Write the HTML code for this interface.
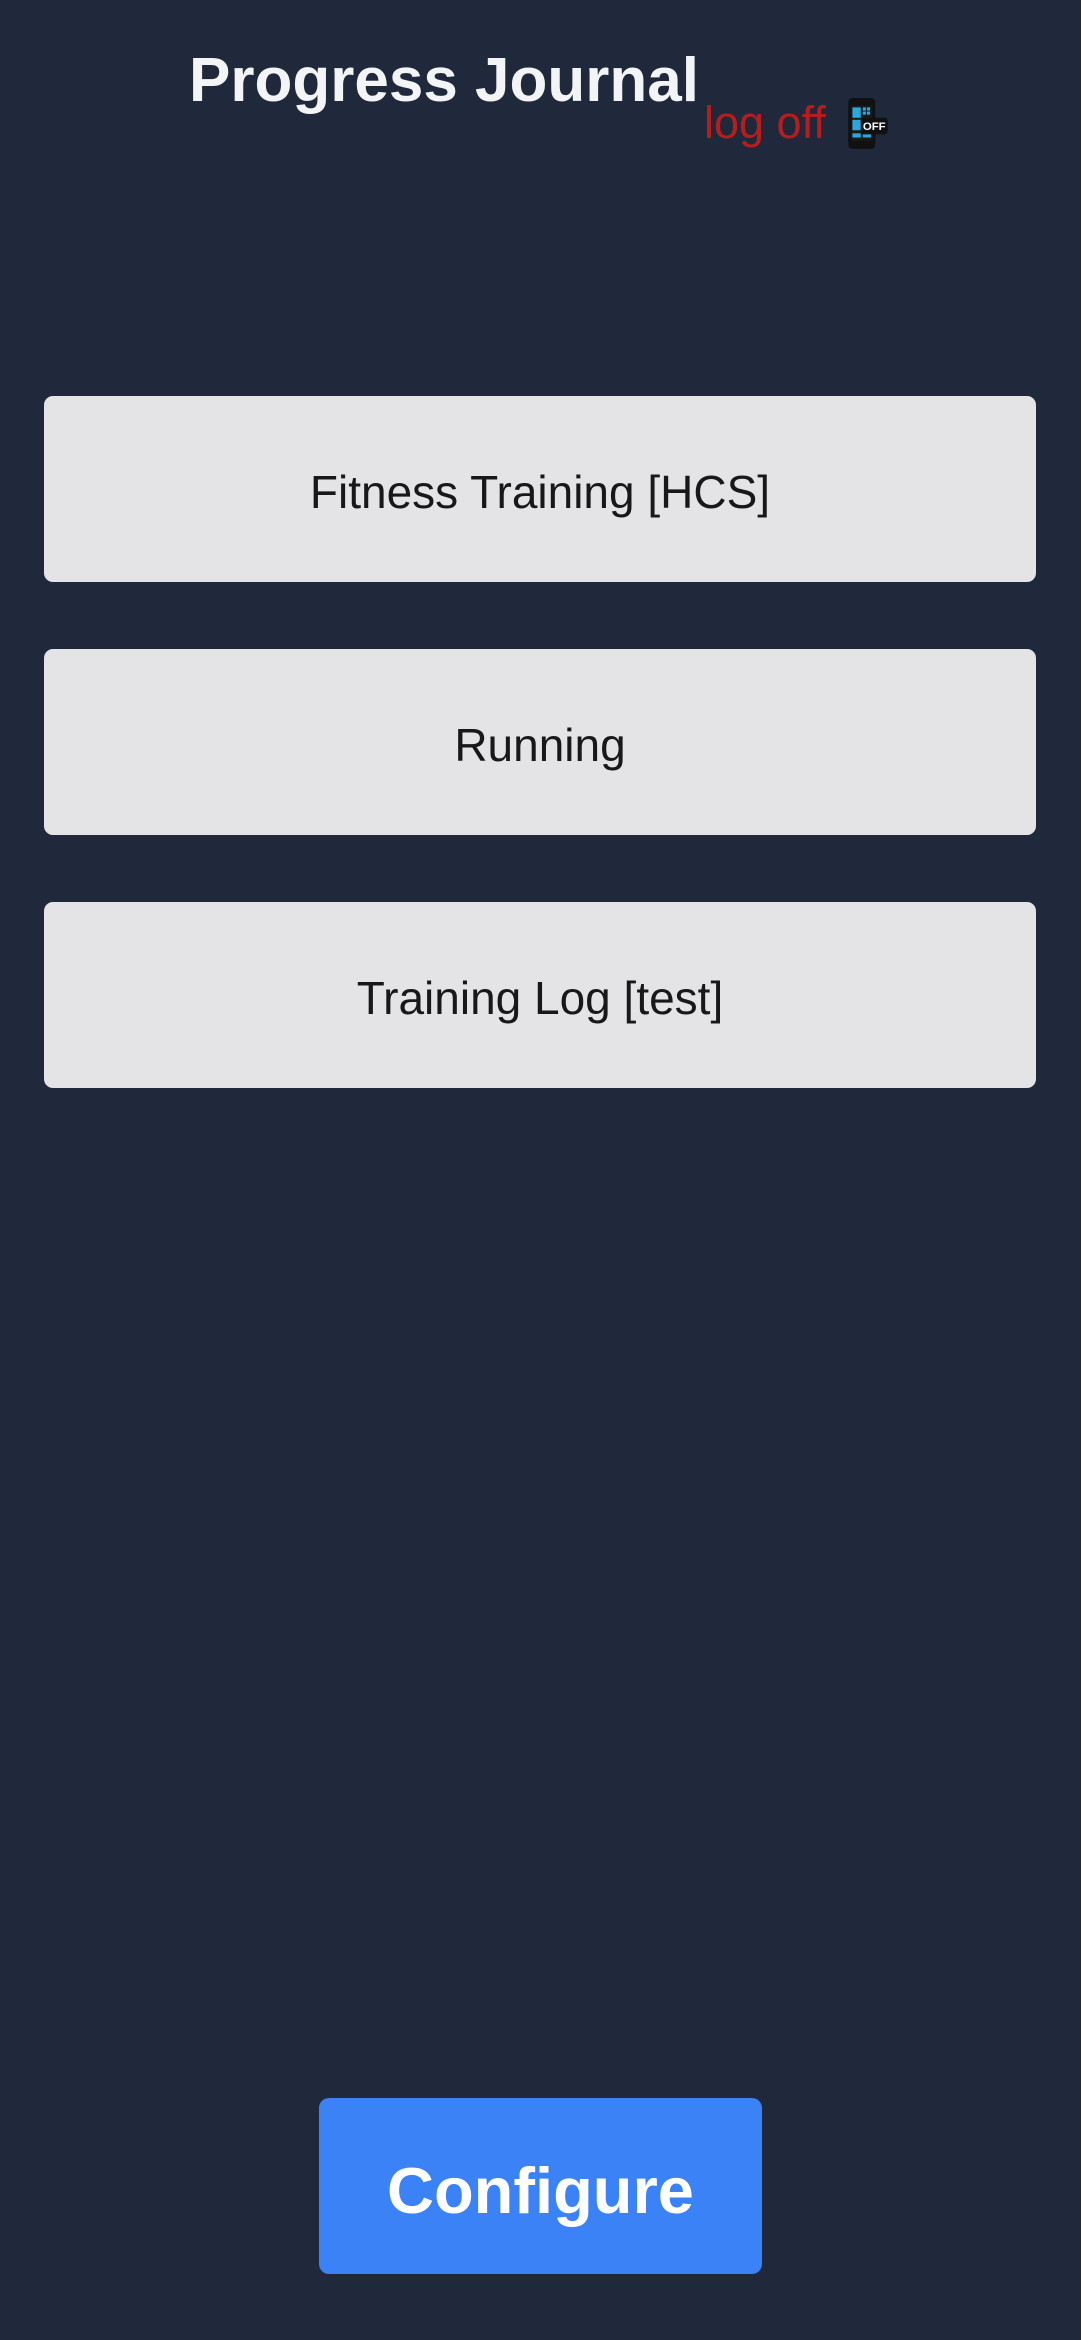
<!DOCTYPE html>
<html><head><meta charset="utf-8"><style>
html,body{margin:0;padding:0;background:#1f293b;width:1081px;height:2340px;overflow:hidden;font-family:"Liberation Sans",sans-serif}
.t{position:absolute;left:189px;top:45px;font-size:62px;font-weight:bold;color:#f3f4f6;white-space:nowrap;line-height:72px}
.lo{position:absolute;left:704px;top:95px;font-size:45px;color:#b91c1c;white-space:nowrap;line-height:56px}
.b{position:absolute;left:44px;width:992px;height:186px;background:#e4e4e7;border-radius:9px;display:flex;align-items:center;justify-content:center;font-size:46px;color:#18181b;padding-top:6px;box-sizing:border-box}
.c{position:absolute;left:319px;top:2098px;width:443px;height:176px;background:#3b82f6;border-radius:10px;display:flex;align-items:center;justify-content:center;font-size:65px;font-weight:bold;color:#fff;padding-top:8px;box-sizing:border-box}
</style></head><body>
<div class="t">Progress Journal</div>
<div class="lo">log off</div>
<svg style="position:absolute;left:846px;top:97px" width="44" height="54" viewBox="0 0 42 52">
<rect x="2" y="1" width="26" height="49" rx="4" fill="#111"/>
<rect x="5" y="8" width="20" height="34" fill="#1a1a1a"/>
<rect x="6" y="10" width="8" height="10" fill="#29a8e0"/>
<rect x="16" y="10" width="3" height="3" fill="#29a8e0"/><rect x="20" y="10" width="3" height="3" fill="#29a8e0"/>
<rect x="16" y="14" width="3" height="3" fill="#29a8e0"/><rect x="20" y="14" width="3" height="3" fill="#29a8e0"/>
<rect x="6" y="22" width="8" height="10" fill="#29a8e0"/>
<rect x="6" y="35" width="8" height="4" fill="#29a8e0"/><rect x="16" y="35" width="8" height="4" fill="#29a8e0"/>
<rect x="14" y="20" width="26" height="16" rx="3" fill="#111"/>
<text x="27" y="32" font-family="Liberation Sans" font-weight="bold" font-size="11" fill="#fff" text-anchor="middle">OFF</text>
</svg>
<div class="b" style="top:396px">Fitness Training [HCS]</div>
<div class="b" style="top:649px">Running</div>
<div class="b" style="top:902px">Training Log [test]</div>
<div class="c">Configure</div>
</body></html>
